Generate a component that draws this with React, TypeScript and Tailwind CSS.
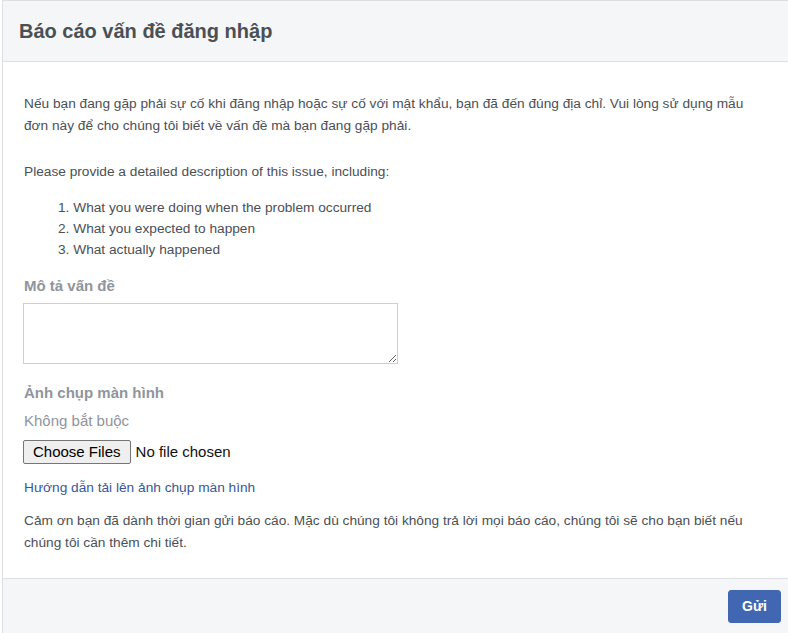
export default function App() {
  return (
    <div className="w-[788px] h-[633px] overflow-hidden bg-white font-['Liberation_Sans',Arial,sans-serif] text-[#4b4f56]">
      <div className="ml-[2px] flex h-full flex-col border-l border-t border-[#dddfe2]">
        {/* Header */}
        <div className="flex h-[61px] items-center border-b border-[#dddfe2] bg-[#f5f6f7] pl-4">
          <h2 className="text-[20px] font-bold leading-[26px] text-[#4b4f56]">Báo cáo vấn đề đăng nhập</h2>
        </div>

        {/* Body */}
        <div className="pl-[21px] pr-[24px] pt-[31px] pb-[24px] text-[13.7px]">
          <p className="leading-[22px]">
            Nếu bạn đang gặp phải sự cố khi đăng nhập hoặc sự cố với mật khẩu, bạn đã đến đúng địa chỉ. Vui lòng sử dụng mẫu đơn này để cho chúng tôi biết về vấn đề mà bạn đang gặp phải.
          </p>
          <p className="mt-[24px] leading-[22px]">Please provide a detailed description of this issue, including:</p>
          <div className="mt-[14px] pl-[34px] leading-[21px]">
            <div>1. What you were doing when the problem occurred</div>
            <div>2. What you expected to happen</div>
            <div>3. What actually happened</div>
          </div>

          <div className="mt-[16px] text-[15px] font-bold leading-[20px] text-[#90949c]">Mô tả vấn đề</div>
          <textarea className="-ml-px mt-[7px] block h-[61px] w-[375px] border border-[#ccd0d5] bg-white p-1 text-[14px] outline-none" />

          <div className="mt-[19px] text-[15px] font-bold leading-[20px] text-[#90949c]">Ảnh chụp màn hình</div>
          <div className="mt-[8px] text-[15px] leading-[20px] text-[#90949c]">Không bắt buộc</div>
          <div className="-ml-px mt-[9px] flex items-center gap-[5px] text-[15px] text-[#111]">
            <button className="h-[24px] rounded-[2px] border border-[#767676] bg-[#efefef] px-[9px] leading-[20px] text-black">
              Choose Files
            </button>
            <span>No file chosen</span>
          </div>

          <a className="mt-[14px] block leading-[20px] text-[#365899]">Hướng dẫn tải lên ảnh chụp màn hình</a>
          <p className="mt-[12px] leading-[22px]">
            Cảm ơn bạn đã dành thời gian gửi báo cáo. Mặc dù chúng tôi không trả lời mọi báo cáo, chúng tôi sẽ cho bạn biết nếu chúng tôi cần thêm chi tiết.
          </p>
        </div>

        {/* Footer */}
        <div className="flex flex-1 justify-end border-t border-[#dddfe2] bg-[#f5f6f7] pr-[7px] pt-[11px]">
          <button className="h-[33px] rounded-[3px] border border-[#4267b2] bg-[#4267b2] px-[13px] text-[14px] font-bold text-white">
            Gửi
          </button>
        </div>
      </div>
    </div>
  );
}
